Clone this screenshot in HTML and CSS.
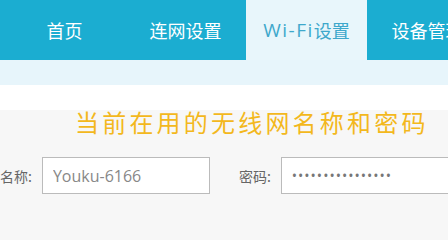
FILE: index.html
```
<!DOCTYPE html>
<html lang="zh-CN">
  <head>
    <meta charset="UTF-8" />
    <meta name="viewport" content="width=device-width,initial-scale=1.0" />
    <title>Wi-Fi设置</title>
    <link rel="stylesheet" href="styles.css">
  </head>
  <body>
    <div class="nav">
      <a class="tab" href="#">首页</a>
      <a class="tab" href="#">连网设置</a>
      <a class="tab active" href="#"><span class="latin">Wi-Fi</span>设置</a>
      <a class="tab" href="#">设备管理</a>
    </div>
    <div class="subbar"></div>
    <div class="spacer"></div>
    <div class="panel">
      <h2 class="title">当前在用的无线网名称和密码</h2>
      <div class="form-row">
        <label class="field-label" for="ssid">名称:</label>
        <input id="ssid" class="field name-field" type="text" value="Youku-6166">
        <label class="field-label pwd-label" for="pwd">密码:</label>
        <input id="pwd" class="field pwd-field" type="password" value="1234567890123456">
      </div>
    </div>
  </body>
</html>
```
FILE: styles.css
```
body {
  margin: 0;
  font-family: "Open Sans", "Noto Sans CJK SC", sans-serif;
  background-color: #f7f7f7;
  overflow: hidden;
}
.nav {
  display: flex;
  height: 60px;
  padding-left: 4px;
  background-color: #1badd1;
}
.tab {
  flex: 0 0 121px;
  display: flex;
  justify-content: center;
  align-items: center;
  padding-bottom: 1px;
  color: #fff;
  font-size: 18px;
  text-decoration: none;
  white-space: nowrap;
}
.tab.active {
  background-color: #e8f6fb;
  color: #3ea8cb;
}
.tab .latin {
  font-size: 19px;
  letter-spacing: 1.5px;
}
.subbar {
  height: 25px;
  background-color: #e7f5fb;
}
.spacer {
  height: 25px;
  background-color: #fff;
}
.panel {
  height: 130px;
}
.title {
  margin: 0 0 0 75px;
  font-family: "Noto Sans CJK SC", sans-serif;
  font-size: 24px;
  font-weight: normal;
  line-height: 24px;
  letter-spacing: 3.2px;
  color: #f3b81d;
}
.form-row {
  display: flex;
  align-items: center;
  margin-top: 23px;
}
.field-label {
  font-family: "Noto Sans CJK SC", sans-serif;
  font-size: 14px;
  color: #666;
  margin-right: 10px;
  white-space: nowrap;
}
.pwd-label {
  margin-left: 29px;
}
.field {
  box-sizing: border-box;
  height: 37px;
  padding: 0 10px;
  border: 1px solid #bbb;
  background-color: #fff;
  font-family: "Open Sans", sans-serif;
  font-size: 16px;
  color: #888;
  outline: none;
}
.name-field {
  width: 168px;
}
.pwd-field {
  width: 200px;
  font-size: 14px;
  letter-spacing: 1px;
  color: #777;
}
```
